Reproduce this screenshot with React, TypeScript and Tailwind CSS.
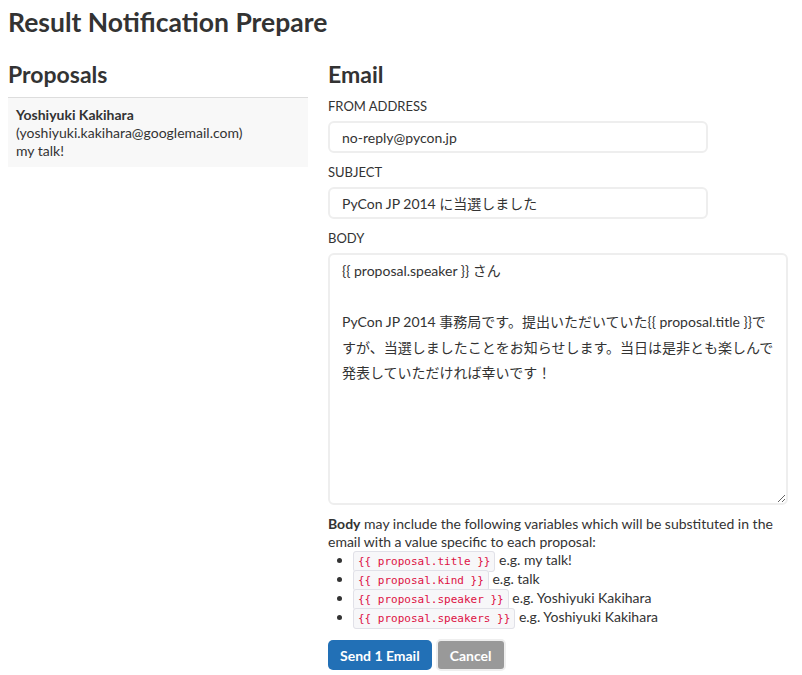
import React from 'react';

const variables = [
  { name: '{{ proposal.title }}', example: 'my talk!' },
  { name: '{{ proposal.kind }}', example: 'talk' },
  { name: '{{ proposal.speaker }}', example: 'Yoshiyuki Kakihara' },
  { name: '{{ proposal.speakers }}', example: 'Yoshiyuki Kakihara' },
];

const bodyText =
  '{{ proposal.speaker }} さん\n\nPyCon JP 2014 事務局です。提出いただいていた{{ proposal.title }}ですが、当選しましたことをお知らせします。当日は是非とも楽しんで発表していただければ幸いです！';

const App: React.FC = () => {
  return (
    <div
      className="min-h-[675px] bg-white px-2 text-[14px] text-[#333]"
      style={{ fontFamily: 'Lato, "Noto Sans CJK JP", sans-serif' }}
    >
      <h1 className="pt-[7px] text-[26.5px] leading-[30px] font-bold">Result Notification Prepare</h1>

      <div className="mt-[22px] flex gap-5">
        {/* Proposals */}
        <div className="w-[300px] shrink-0">
          <h2 className="text-[23px] leading-[30px] font-bold">Proposals</h2>
          <div className="mt-[8px] border-t border-[#ddd] bg-[#f8f8f8] px-2 pt-[8px] pb-[7px] leading-[18px]">
            <div className="font-bold">Yoshiyuki Kakihara</div>
            <div>(yoshiyuki.kakihara@googlemail.com)</div>
            <div>my talk!</div>
          </div>
        </div>

        {/* Email */}
        <div className="flex-1 pr-[6px]">
          <h2 className="text-[23px] leading-[30px] font-bold">Email</h2>
          <form className="mt-[8px]" onSubmit={e => e.preventDefault()}>
            <label className="block text-[13px] leading-[18px]">FROM ADDRESS</label>
            <input
              type="text"
              defaultValue="no-reply@pycon.jp"
              className="mt-[6px] block h-[32px] w-[380px] rounded-[6px] border-2 border-[#eee] px-[12px] text-[14px] text-[#333] outline-none"
            />
            <label className="mt-[10px] block text-[13px] leading-[18px]">SUBJECT</label>
            <input
              type="text"
              defaultValue="PyCon JP 2014 に当選しました"
              className="mt-[6px] block h-[32px] w-[380px] rounded-[6px] border-2 border-[#eee] px-[12px] text-[14px] text-[#333] outline-none"
            />
            <label className="mt-[10px] block text-[13px] leading-[18px]">BODY</label>
            <textarea
              defaultValue={bodyText}
              className="mt-[6px] block h-[252px] w-full resize-y rounded-[6px] border-2 border-[#eee] px-[12px] pt-[3px] pb-[5px] text-[14px] leading-[25.5px] text-[#333] outline-none"
            />

            <p className="mt-[10px] leading-[17.5px]">
              <strong>Body</strong> may include the following variables which will be substituted in the email with a value
              specific to each proposal:
            </p>
            <ul className="list-disc pl-[25px]">
              {variables.map(v => (
                <li key={v.name} className="h-[19px] leading-[19px]">
                  <code
                    className="rounded-[3px] border border-[#e1e1e8] bg-[#f7f7f9] px-[4px] py-[3px] text-[11px] leading-none text-[#dd1144]"
                    style={{ fontFamily: '"DejaVu Sans Mono", monospace' }}
                  >
                    {v.name}
                  </code>{' '}
                  e.g. {v.example}
                </li>
              ))}
            </ul>

            <div className="mt-[13px] flex items-center gap-[4px]">
              <button
                type="submit"
                className="h-[30px] rounded-[5px] bg-[#2270b6] px-[12px] text-[14px] font-bold text-white"
              >
                Send 1 Email
              </button>
              <button
                type="button"
                className="h-[32px] rounded-[5px] border-2 border-[#eee] bg-[#999] px-[12px] text-[14px] font-bold text-white"
              >
                Cancel
              </button>
            </div>
          </form>
        </div>
      </div>
    </div>
  );
};

export default App;
